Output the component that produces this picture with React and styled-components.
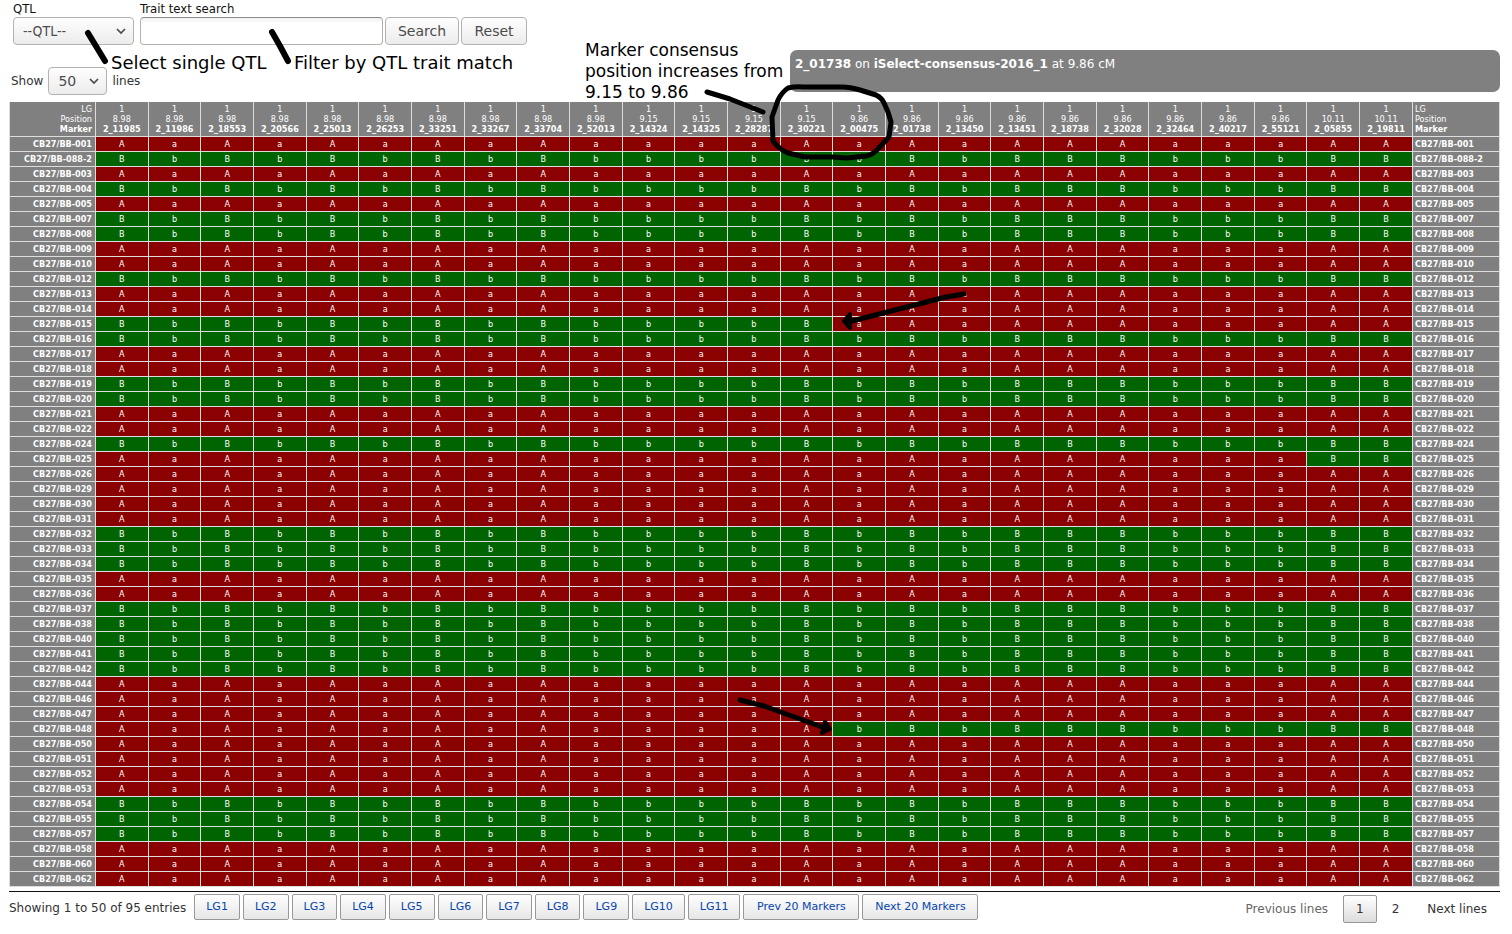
import React from "react";
import styled, { createGlobalStyle } from "styled-components";

const Global = createGlobalStyle`
  *, *::before, *::after { box-sizing: border-box; }
  body {
    margin: 0;
    background: #fff;
    color: #333;
    font: 12px/16px "DejaVu Sans", sans-serif;
  }
  button, input, select { font-family: inherit; }
`;

const Page = styled.main`
  position: relative;
  padding: 0 12px 0 9px;
`;

const TopBar = styled.div`
  display: flex;
  justify-content: space-between;
  height: 102px;
`;

const Controls = styled.form`
  padding: 1px 0 0 4px;
`;

const SearchRow = styled.div`
  display: flex;
  align-items: flex-end;
  gap: 2px;
`;

const Field = styled.label`
  display: flex;
  flex-direction: column;
  width: ${(p) => p.$width}px;
  margin-right: ${(p) => p.$after || 0}px;
  color: #111;
  font: 13px/16px "DejaVu Sans Condensed", "DejaVu Sans", sans-serif;
`;

const controlLook = `
  height: 28px;
  border: 1px solid #b5b2ae;
  border-radius: 4px;
  color: #4c4c4c;
  font-size: 14px;
  background: linear-gradient(#fefefe, #ececec);
`;

const SelectBox = styled.span`
  position: relative;
  display: block;
  width: ${(p) => p.$width || "100%"};
`;

const Select = styled.select`
  ${controlLook}
  display: block;
  width: 100%;
  padding: 0 9px;
  appearance: none;
`;

const Arrow = styled.svg`
  position: absolute;
  right: 8px;
  top: 10px;
  width: 10px;
  height: 8px;
  pointer-events: none;
`;

const TextInput = styled.input`
  ${controlLook}
  width: 100%;
  border-top-color: #8e8b88;
  background: linear-gradient(#f1f1f1, #fff 6px);
`;

const FormButton = styled.button`
  ${controlLook}
  width: ${(p) => p.$width}px;
  padding: 0;
`;

const LengthRow = styled.label`
  display: flex;
  align-items: center;
  gap: 5px;
  margin: 22px 0 0 -2px;
`;

const Info = styled.div`
  width: 710px;
  height: 42px;
  margin-top: 50px;
  padding: 6px 5px;
  border-radius: 7px;
  background: #808080;
  color: #fff;
`;

const Grid = styled.table`
  width: 100%;
  table-layout: fixed;
  border-collapse: separate;
  border-spacing: 0;
  border-left: 1px solid #ddd;
  color: #fff;
  font: 9px/10px "DejaVu Sans Condensed", "DejaVu Sans", sans-serif;
`;

const NameCol = styled.col`
  width: ${(p) => p.$width}px;
`;

const HeadCell = styled.th`
  height: 35px;
  padding: 2px ${(p) => (p.$align === "right" ? 3 : 1)}px 2px ${(p) => (p.$align === "left" ? 2 : 1)}px;
  border-right: 1px solid #ddd;
  border-bottom: 1px solid #ddd;
  background: #808080;
  font-weight: 400;
  text-align: ${(p) => p.$align || "center"};
  white-space: nowrap;
`;

const LineName = styled.th`
  height: 15px;
  padding: 0 3px 0 2px;
  border-right: 1px solid #ddd;
  border-bottom: 1px solid #ddd;
  background: #808080;
  font-weight: 700;
  text-align: ${(p) => p.$align};
`;

const Call = styled.td`
  padding: 0;
  border-right: 1px solid #ddd;
  border-bottom: 1px solid #ddd;
  background: ${(p) => (p.$parent === "B" ? "#006400" : "#8b0000")};
  text-align: center;
`;

const Footer = styled.footer`
  display: flex;
  justify-content: space-between;
  margin-top: 4px;
  padding-top: 2px;
  border-top: 1px solid #111;
`;

const FooterGroup = styled.div`
  display: flex;
  align-items: flex-start;
  gap: ${(p) => p.$gap}px;
`;

const Status = styled.span`
  padding: 6px 5px 0 0;
`;

const NavButton = styled.button`
  min-width: ${(p) => (p.$wide ? 116 : 0)}px;
  height: 26px;
  padding: 0 11px 2px;
  border: 1px solid #999;
  border-radius: 2px;
  background: linear-gradient(#fff, #e6e6e6);
  color: #0645ad;
  font-size: 11px;
`;

const PageButton = styled.button`
  height: 28px;
  margin-top: 1px;
  padding: 0 12px;
  border: 1px solid ${(p) => (p.$current ? "#979797" : "transparent")};
  border-radius: 2px;
  background: ${(p) => (p.$current ? "linear-gradient(#fff, #dcdcdc)" : "none")};
  color: ${(p) => (p.$muted ? "#666" : "#333")};
  font-size: 12px;
`;

const Note = styled.p`
  position: absolute;
  left: ${(p) => p.$x}px;
  top: ${(p) => p.$y}px;
  margin: 0;
  color: #000;
  font-size: ${(p) => p.$size || 18}px;
  line-height: 21px;
  white-space: nowrap;
`;

const Ink = styled.svg`
  position: absolute;
  left: 0;
  top: 0;
  width: 1000px;
  height: 760px;
  fill: none;
  stroke: #000;
  stroke-linecap: round;
  stroke-linejoin: round;
  pointer-events: none;
`;

const markers = [
  ["8.98", "2_11985"], ["8.98", "2_11986"], ["8.98", "2_18553"], ["8.98", "2_20566"],
  ["8.98", "2_25013"], ["8.98", "2_26253"], ["8.98", "2_33251"], ["8.98", "2_33267"],
  ["8.98", "2_33704"], ["8.98", "2_52013"], ["9.15", "2_14324"], ["9.15", "2_14325"],
  ["9.15", "2_28287"], ["9.15", "2_30221"], ["9.86", "2_00475"], ["9.86", "2_01738"],
  ["9.86", "2_13450"], ["9.86", "2_13451"], ["9.86", "2_18738"], ["9.86", "2_32028"],
  ["9.86", "2_32464"], ["9.86", "2_40217"], ["9.86", "2_55121"], ["10.11", "2_05855"],
  ["10.11", "2_19811"],
];

const upperCase = "UlUlUlUlUllllUlUlUUUlllUU";

// Each line carries one parental allele, or [first, second, column where it switches].
const lines = [
  ["001", "A"], ["088-2", "B"], ["003", "A"], ["004", "B"], ["005", "A"], ["007", "B"],
  ["008", "B"], ["009", "A"], ["010", "A"], ["012", "B"], ["013", "A"], ["014", "A"],
  ["015", "B", "A", 14], ["016", "B"], ["017", "A"], ["018", "A"], ["019", "B"],
  ["020", "B"], ["021", "A"], ["022", "A"], ["024", "B"], ["025", "A", "B", 23],
  ["026", "A"], ["029", "A"], ["030", "A"], ["031", "A"], ["032", "B"], ["033", "B"],
  ["034", "B"], ["035", "A"], ["036", "A"], ["037", "B"], ["038", "B"], ["040", "B"],
  ["041", "B"], ["042", "B"], ["044", "A"], ["046", "A"], ["047", "A"],
  ["048", "A", "B", 14], ["050", "A"], ["051", "A"], ["052", "A"], ["053", "A"],
  ["054", "B"], ["055", "B"], ["057", "B"], ["058", "A"], ["060", "A"], ["062", "A"],
];

const Chevron = () => (
  <Arrow viewBox="0 0 10 8" aria-hidden="true">
    <path d="M1 2l4 4 4-4" fill="none" stroke="#4c4c4c" strokeWidth="1.7" />
  </Arrow>
);

const Labels = ({ align }) => (
  <HeadCell $align={align}>
    LG<br />Position<br /><b>Marker</b>
  </HeadCell>
);

const GenotypeTable = () => (
  <Grid>
    <colgroup>
      <NameCol $width={86} />
      {markers.map(([, name]) => <col key={name} />)}
      <NameCol $width={87} />
    </colgroup>
    <thead>
      <tr>
        <Labels align="right" />
        {markers.map(([position, name]) => (
          <HeadCell key={name}>1<br />{position}<br /><b>{name}</b></HeadCell>
        ))}
        <Labels align="left" />
      </tr>
    </thead>
    <tbody>
      {lines.map(([id, first, second, at]) => (
        <tr key={id}>
          <LineName $align="right">CB27/BB-{id}</LineName>
          {markers.map(([, name], i) => {
            const parent = second && i >= at ? second : first;
            return (
              <Call key={name} $parent={parent}>
                {upperCase[i] === "U" ? parent : parent.toLowerCase()}
              </Call>
            );
          })}
          <LineName $align="left">CB27/BB-{id}</LineName>
        </tr>
      ))}
    </tbody>
  </Grid>
);

export default function App() {
  return (
    <>
      <Global />
      <Page>
        <TopBar>
          <Controls onSubmit={(e) => e.preventDefault()}>
            <SearchRow>
              <Field $width={121} $after={4}>
                QTL
                <SelectBox>
                  <Select><option>--QTL--</option></Select>
                  <Chevron />
                </SelectBox>
              </Field>
              <Field $width={243}>
                Trait text search
                <TextInput type="text" />
              </Field>
              <FormButton $width={74}>Search</FormButton>
              <FormButton $width={66} type="reset">Reset</FormButton>
            </SearchRow>
            <LengthRow>
              Show
              <SelectBox $width="59px">
                <Select><option>50</option></Select>
                <Chevron />
              </SelectBox>
              lines
            </LengthRow>
          </Controls>
          <Info><b>2_01738</b> on <b>iSelect-consensus-2016_1</b> at 9.86 cM</Info>
        </TopBar>
        <GenotypeTable />
        <Footer>
          <FooterGroup $gap={3}>
            <Status>Showing 1 to 50 of 95 entries</Status>
            {Array.from({ length: 11 }, (_, i) => (
              <NavButton key={i}>LG{i + 1}</NavButton>
            ))}
            <NavButton $wide>Prev 20 Markers</NavButton>
            <NavButton $wide>Next 20 Markers</NavButton>
          </FooterGroup>
          <FooterGroup $gap={2}>
            <PageButton $muted>Previous lines</PageButton>
            <PageButton $current>1</PageButton>
            <PageButton>2</PageButton>
            <PageButton>Next lines</PageButton>
          </FooterGroup>
        </Footer>
        <Note $x={111} $y={52}>Select single QTL</Note>
        <Note $x={294} $y={52}>Filter by QTL trait match</Note>
        <Note $x={585} $y={40} $size={17}>
          Marker consensus<br />position increases from<br />9.15 to 9.86
        </Note>
        <Ink viewBox="0 0 1000 760" aria-hidden="true">
          <path strokeWidth="6" d="M88 33L105 61M272 32L280 46 288 61" />
          <path strokeWidth="5" d="M707 92L730 99 763 112" />
          <path
            strokeWidth="5"
            d="M788 88Q796 86 804 87H842Q850 87 860 90L876 95Q882 98 884 103L888 112 891 122 889 137 877 150Q872 155 866 156L847 158 833 157H805L788 153Q780 150 773 141L772 117 778 100Q782 92 788 88Z"
          />
          <path strokeWidth="5" d="M964 294L946 297 848 322M740 700L764 706 825 728" />
          <path fill="#000" strokeWidth="4" d="M850 314L844 321 850 328ZM825 722L830 729 822 733Z" />
        </Ink>
      </Page>
    </>
  );
}
